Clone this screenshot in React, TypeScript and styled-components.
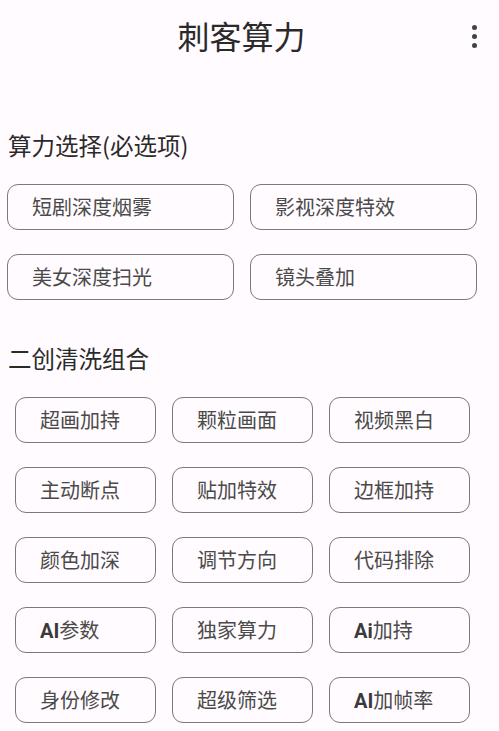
import * as React from 'react';
import styled, { createGlobalStyle } from 'styled-components';

const GlobalStyle = createGlobalStyle`
  html, body {
    margin: 0;
    padding: 0;
    background: #fffbfe;
  }
  body {
    font-family: "Noto Sans CJK SC", "Noto Sans", sans-serif;
    color: #222;
  }
`;

const computeOptions = ['短剧深度烟雾', '影视深度特效', '美女深度扫光', '镜头叠加'];

const cleanOptions = [
  '超画加持', '颗粒画面', '视频黑白',
  '主动断点', '贴加特效', '边框加持',
  '颜色加深', '调节方向', '代码排除',
  'AI参数', '独家算力', 'Ai加持',
  '身份修改', '超级筛选', 'AI加帧率',
];

// Latin letters render in a heavier face than the CJK glyphs on the device
function OptionLabel({ text }: { text: string }): React.ReactElement {
  const parts = text.split(/([A-Za-z]+)/).filter(Boolean);
  return (
    <>
      {parts.map((part, i) =>
        /^[A-Za-z]+$/.test(part) ? <StyledLatin key={i}>{part}</StyledLatin> : <span key={i}>{part}</span>,
      )}
    </>
  );
}

function App(): React.ReactElement {
  return (
    <>
      <GlobalStyle />
      <StyledPage>
        <StyledHeader>
          <StyledTitle>刺客算力</StyledTitle>
          <StyledMenu aria-label="更多">
            <span />
            <span />
            <span />
          </StyledMenu>
        </StyledHeader>

        <StyledSectionTitle $top={56}>算力选择(必选项)</StyledSectionTitle>
        <StyledGrid $columns={2} $cell={227} $left={7}>
          {computeOptions.map((label) => (
            <StyledOption key={label}>
              <OptionLabel text={label} />
            </StyledOption>
          ))}
        </StyledGrid>

        <StyledSectionTitle $top={43}>二创清洗组合</StyledSectionTitle>
        <StyledGrid $columns={3} $cell={141} $left={15}>
          {cleanOptions.map((label) => (
            <StyledOption key={label}>
              <OptionLabel text={label} />
            </StyledOption>
          ))}
        </StyledGrid>
      </StyledPage>
    </>
  );
}

const StyledPage = styled.div`
  width: 499px;
  min-height: 731px;
  display: flex;
  flex-direction: column;
`;

const StyledHeader = styled.header`
  position: relative;
  height: 74px;
  display: flex;
  align-items: flex-start;
  justify-content: center;
`;

const StyledTitle = styled.h1`
  margin: 13px 0 0 -16px;
  font-size: 32px;
  font-weight: 400;
  line-height: 44px;
  color: #2a2a2a;
`;

const StyledMenu = styled.button`
  position: absolute;
  right: 14px;
  top: 22px;
  width: 22px;
  height: 28px;
  padding: 0;
  border: none;
  background: transparent;
  display: flex;
  flex-direction: column;
  align-items: center;
  justify-content: center;
  gap: 4px;

  span {
    width: 5px;
    height: 5px;
    border-radius: 50%;
    background: #444;
  }
`;

const StyledSectionTitle = styled.h2<{ $top: number }>`
  margin: ${({ $top }) => $top}px 0 0 8px;
  font-size: 23.5px;
  font-weight: 400;
  line-height: 30px;
  color: #2a2a2a;
`;

const StyledGrid = styled.div<{ $columns: number; $cell: number; $left: number }>`
  display: grid;
  grid-template-columns: repeat(${({ $columns }) => $columns}, ${({ $cell }) => $cell}px);
  column-gap: 16px;
  row-gap: 24px;
  margin-top: 24px;
  padding-left: ${({ $left }) => $left}px;
`;

const StyledOption = styled.button`
  box-sizing: border-box;
  height: 46px;
  padding: 0 0 0 24px;
  border: 1.5px solid #7a7a7a;
  border-radius: 11px;
  background: transparent;
  text-align: left;
  font-family: "Noto Sans CJK SC", "Noto Sans", sans-serif;
  font-size: 20px;
  color: #4a4a4a;
  line-height: 1;
`;

const StyledLatin = styled.span`
  font-family: Roboto, "Noto Sans", sans-serif;
  font-weight: 700;
  color: #3a3a3a;
`;

export default App;
